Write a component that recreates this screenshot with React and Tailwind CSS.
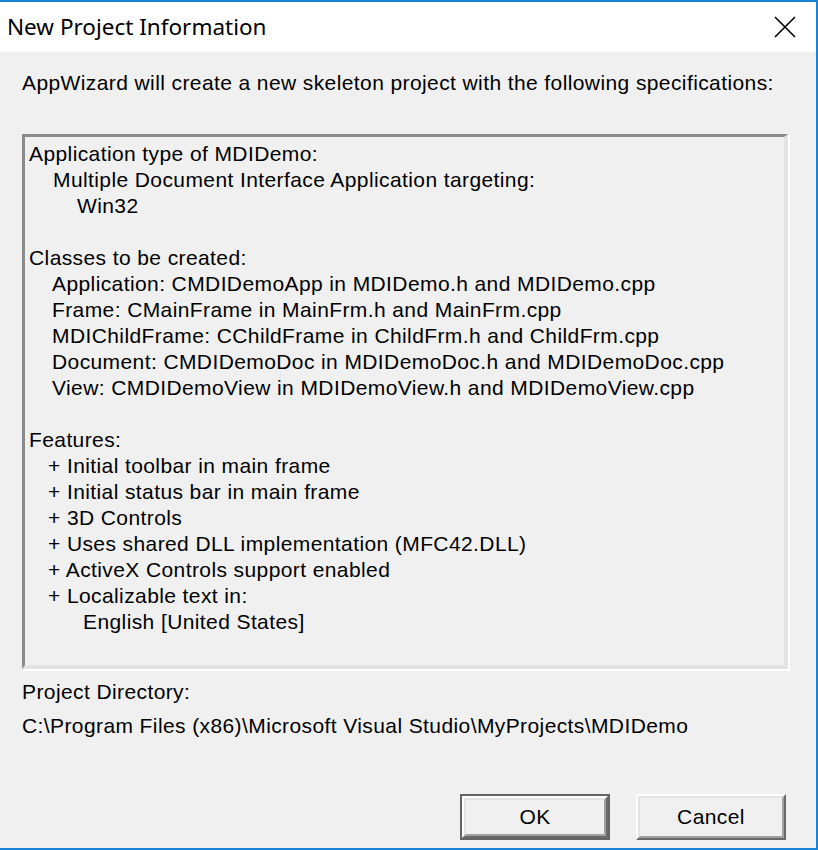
import React from "react";

const specLines = [
  { text: "Application type of MDIDemo:", indent: "pl-0" },
  { text: "Multiple Document Interface Application targeting:", indent: "pl-[24px]" },
  { text: "Win32", indent: "pl-[48px]" },
  { text: "", indent: "pl-0" },
  { text: "Classes to be created:", indent: "pl-0" },
  { text: "Application: CMDIDemoApp in MDIDemo.h and MDIDemo.cpp", indent: "pl-[23px]" },
  { text: "Frame: CMainFrame in MainFrm.h and MainFrm.cpp", indent: "pl-[23px]" },
  { text: "MDIChildFrame: CChildFrame in ChildFrm.h and ChildFrm.cpp", indent: "pl-[23px]" },
  { text: "Document: CMDIDemoDoc in MDIDemoDoc.h and MDIDemoDoc.cpp", indent: "pl-[23px]" },
  { text: "View: CMDIDemoView in MDIDemoView.h and MDIDemoView.cpp", indent: "pl-[23px]" },
  { text: "", indent: "pl-0" },
  { text: "Features:", indent: "pl-0" },
  { text: "+ Initial toolbar in main frame", indent: "pl-[19px]" },
  { text: "+ Initial status bar in main frame", indent: "pl-[19px]" },
  { text: "+ 3D Controls", indent: "pl-[19px]" },
  { text: "+ Uses shared DLL implementation (MFC42.DLL)", indent: "pl-[19px]" },
  { text: "+ ActiveX Controls support enabled", indent: "pl-[19px]" },
  { text: "+ Localizable text in:", indent: "pl-[19px]" },
  { text: "English [United States]", indent: "pl-[54px]" },
];

const CloseIcon = () => (
  <svg width="22" height="22" viewBox="0 0 22 22" fill="none">
    <path d="M1 1 L21 21 M21 1 L1 21" stroke="#000" strokeWidth="1.6" />
  </svg>
);

const OkButton = () => (
  <button type="button" className="w-[150px] h-[46px] border-2 border-[#646464] flex">
    <span className="flex-1 flex border-t-2 border-l-2 border-white border-r-2 border-b-2 border-r-[#696969] border-b-[#696969]">
      <span className="flex-1 flex items-center justify-center border-t-2 border-l-2 border-[#e3e3e3] border-r-2 border-b-2 border-r-[#a0a0a0] border-b-[#a0a0a0] bg-[#f0f0f0]">
        OK
      </span>
    </span>
  </button>
);

const CancelButton = () => (
  <button type="button" className="w-[150px] h-[46px] flex border-t-2 border-l-2 border-white border-r-2 border-b-2 border-r-[#696969] border-b-[#696969]">
    <span className="flex-1 flex items-center justify-center border-t-2 border-l-2 border-[#e3e3e3] border-r-2 border-b-2 border-r-[#a0a0a0] border-b-[#a0a0a0] bg-[#f0f0f0]">
      Cancel
    </span>
  </button>
);

export default function App() {
  return (
    <div className="w-[818px] h-[850px] flex flex-col border-t-2 border-r-2 border-b-2 border-[#1883d7] bg-[#f0f0f0] text-black overflow-hidden">
      {/* Title bar */}
      <div className="h-[50px] bg-white flex items-center justify-between pl-[7px] pr-[20px] shrink-0">
        <span className="text-[22.5px] leading-none font-['Noto_Sans',sans-serif]">New Project Information</span>
        <CloseIcon />
      </div>

      {/* Body */}
      <div className="flex-1 flex flex-col pl-[22px] pr-[28px] pt-[18px] text-[21px] tracking-[0.4px] leading-[26px] font-['Liberation_Sans',Arial,sans-serif]">
        <p className="whitespace-nowrap">AppWizard will create a new skeleton project with the following specifications:</p>

        <div className="mt-[38px] h-[535px] border-t-[3px] border-l-[3px] border-t-[#8a8a8a] border-l-[#8a8a8a] border-r-4 border-b-4 border-r-[#e3e3e3] border-b-[#e3e3e3] shadow-[2px_2px_0_0_#ffffff] pt-[4px] pl-[4px]">
          {specLines.map((line, i) => (
            <div key={i} className={`h-[26px] whitespace-pre ${line.indent}`}>
              {line.text}
            </div>
          ))}
        </div>

        <p className="mt-[10px]">Project Directory:</p>
        <p className="mt-[8px] whitespace-nowrap">C:\Program Files (x86)\Microsoft Visual Studio\MyProjects\MDIDemo</p>

        <div className="mt-[55px] flex justify-end gap-[26px] pr-[2px]">
          <OkButton />
          <CancelButton />
        </div>
      </div>
    </div>
  );
}
